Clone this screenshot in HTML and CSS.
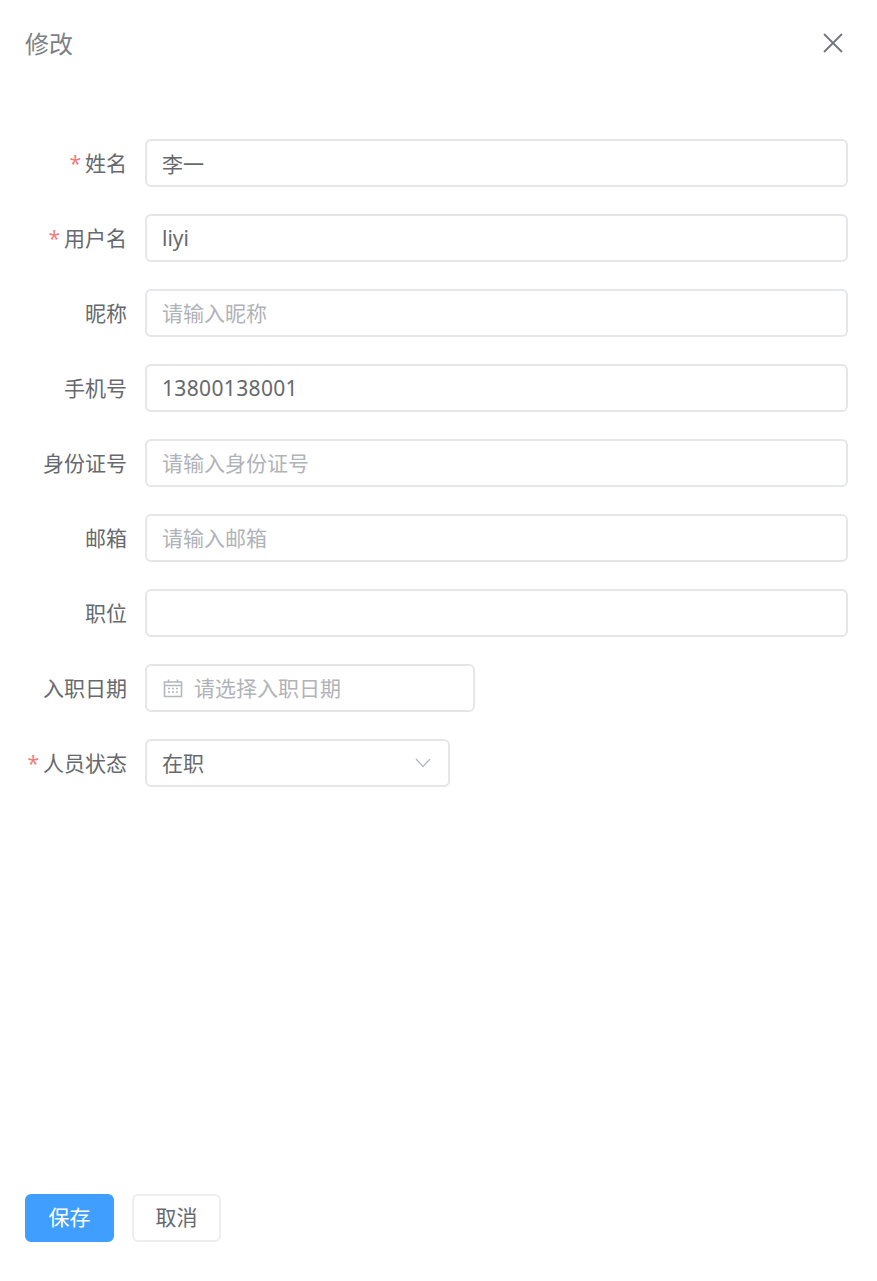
FILE: index.html
```html
<!DOCTYPE html>
<html lang="zh-CN">
<head>
  <meta charset="UTF-8">
  <title>修改</title>
  <link rel="stylesheet" href="styles.css">
</head>
<body>

  <div class="dialog">
    <div class="dialog-header">
      <span class="dialog-title">修改</span>
      <button class="close-btn" type="button" aria-label="关闭">
        <svg width="20" height="20" viewBox="0 0 20 20" fill="none" stroke="#72767b" stroke-width="1.8">
          <path d="M1 1 L19 19 M19 1 L1 19" />
        </svg>
      </button>
    </div>

    <form class="dialog-body">
      <div class="form-row">
        <label class="form-label required">姓名</label>
        <input class="text-input" type="text" value="李一" />
      </div>
      <div class="form-row">
        <label class="form-label required">用户名</label>
        <input class="text-input" type="text" value="liyi" />
      </div>
      <div class="form-row">
        <label class="form-label">昵称</label>
        <input class="text-input" type="text" placeholder="请输入昵称" />
      </div>
      <div class="form-row">
        <label class="form-label">手机号</label>
        <input class="text-input phone-input" type="text" value="13800138001" />
      </div>
      <div class="form-row">
        <label class="form-label">身份证号</label>
        <input class="text-input" type="text" placeholder="请输入身份证号" />
      </div>
      <div class="form-row">
        <label class="form-label">邮箱</label>
        <input class="text-input" type="text" placeholder="请输入邮箱" />
      </div>
      <div class="form-row">
        <label class="form-label">职位</label>
        <input class="text-input" type="text" />
      </div>
      <div class="form-row">
        <label class="form-label">入职日期</label>
        <div class="date-box">
          <svg class="date-icon" width="20" height="20" viewBox="0 0 20 20" fill="none" stroke="#b4b7bd" stroke-width="1.6">
            <path d="M1.5 4 H18.5 V18.5 H1.5 Z M1.5 7.5 H18.5 M5.5 1.5 V5 M14.5 1.5 V5" />
            <path d="M5 10.5 H7 M9 10.5 H11 M13 10.5 H15 M5 14 H7 M9 14 H11 M13 14 H15" stroke-width="1.3" />
          </svg>
          <input class="date-input" type="text" placeholder="请选择入职日期" />
        </div>
      </div>
      <div class="form-row">
        <label class="form-label required">人员状态</label>
        <div class="select-box">
          <span class="select-value">在职</span>
          <svg width="16" height="10" viewBox="0 0 16 10" fill="none" stroke="#b4b7bd" stroke-width="1.3">
            <path d="M1 1 L8 8.5 L15 1" />
          </svg>
        </div>
      </div>
    </form>

    <div class="dialog-footer">
      <button class="btn btn-primary" type="button">保存</button>
      <button class="btn" type="button">取消</button>
    </div>
  </div>

</body>
</html>
```

FILE: styles.css
```css
* {
  box-sizing: border-box;
}
body {
  margin: 0;
  background: #fff;
  font-family: "Noto Sans", "Noto Sans CJK SC", sans-serif;
  font-size: 21px;
  color: #66696e;
}
.dialog {
  display: flex;
  flex-direction: column;
  height: 1281px;
  padding: 0 29px 39px 25px;
}
.dialog-header {
  display: flex;
  justify-content: space-between;
  align-items: center;
  height: 86px;
  margin-right: -5px;
}
.dialog-title {
  padding-bottom: 2px;
  font-size: 24px;
  color: #7d8186;
}
.close-btn {
  display: flex;
  padding: 0;
  margin-right: 10px;
  border: none;
  background: none;
}
.dialog-body {
  flex: 1;
  display: flex;
  flex-direction: column;
  gap: 27px;
  padding-top: 53px;
}
.form-row {
  display: flex;
  align-items: center;
  height: 48px;
}
.form-label {
  width: 120px;
  flex-shrink: 0;
  margin-left: -18px;
  margin-right: 18px;
  padding-bottom: 2px;
  text-align: right;
  white-space: nowrap;
}
.required::before {
  content: "*";
  margin-right: 4px;
  color: #ee8080;
}
.text-input,
.date-box,
.select-box {
  height: 48px;
  border: 2px solid #e4e6ea;
  border-radius: 6px;
  background: #fff;
}
.text-input {
  flex: 1;
  min-width: 0;
  padding: 0 15px;
  font: inherit;
  color: #66696e;
  outline: none;
}
.phone-input {
  letter-spacing: 0.35px;
}
input::placeholder {
  color: #b0b3b9;
  opacity: 1;
}
.date-box {
  display: flex;
  align-items: center;
  width: 330px;
  padding-left: 16px;
}
.date-input {
  flex: 1;
  min-width: 0;
  margin-left: 11px;
  padding: 0;
  border: none;
  font: inherit;
  outline: none;
}
.select-box {
  display: flex;
  justify-content: space-between;
  align-items: center;
  width: 305px;
  padding: 0 17px 0 15px;
}
.select-value {
  padding-bottom: 2px;
}
.dialog-footer {
  display: flex;
  gap: 18px;
}
.btn {
  width: 89px;
  height: 48px;
  padding: 0 0 5px;
  border: 2px solid #edeef1;
  border-radius: 6px;
  background: #fff;
  font: inherit;
  color: #66696e;
}
.btn-primary {
  border-color: #409eff;
  background: #409eff;
  color: #fff;
}
```
